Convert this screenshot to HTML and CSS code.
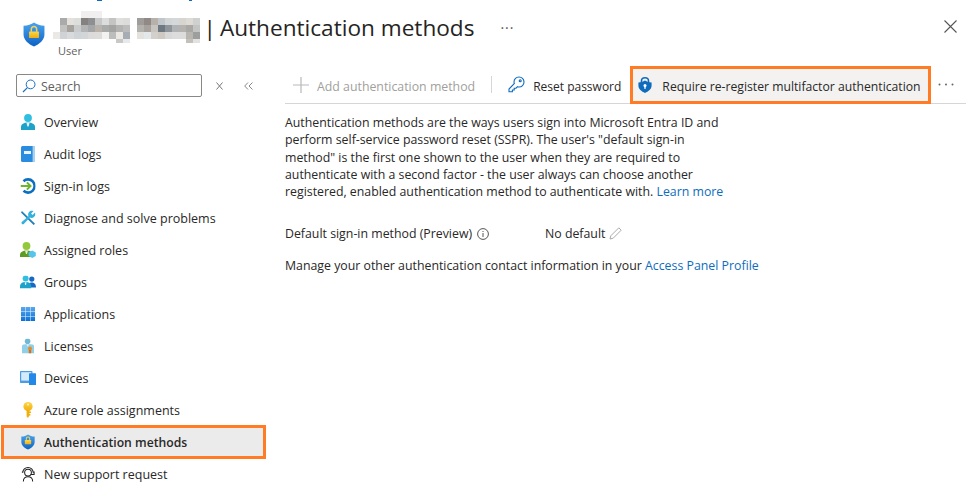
FILE: index.html
```html
<!DOCTYPE html>
<html lang="en">
<head>
    <meta charset="UTF-8">
    <meta name="viewport" content="width=device-width, initial-scale=1.0">
    <title>Authentication methods</title>
    <link rel="stylesheet" href="styles.css">
</head>
<body>
    <svg class="defs" width="0" height="0">
        <defs>
            <linearGradient id="shield" x1="0" y1="0" x2="0" y2="1">
                <stop offset="0" stop-color="#4aa3ee"/>
                <stop offset="1" stop-color="#0d62c4"/>
            </linearGradient>
            <linearGradient id="gold" x1="0" y1="0" x2="0" y2="1">
                <stop offset="0" stop-color="#fcd64a"/>
                <stop offset="1" stop-color="#f2ae0c"/>
            </linearGradient>
            <linearGradient id="tiles" gradientUnits="userSpaceOnUse" x1="0" y1="0" x2="0" y2="14">
                <stop offset="0" stop-color="#5aa8f0"/>
                <stop offset="1" stop-color="#0a72d6"/>
            </linearGradient>
            <symbol id="shield-lock" viewBox="0 0 16 18">
                <path d="M8 .3 C10 1.8 12.5 2.5 15.6 2.7 V9 C15.6 13 12 16 8 17.7 C4 16 .4 13 .4 9 V2.7 C3.5 2.5 6 1.8 8 .3Z" fill="url(#shield)"/>
                <path d="M5.5 7 V5.2 C5.5 3.6 6.6 2.7 8 2.7 C9.4 2.7 10.5 3.6 10.5 5.2 V7 H9.4 V5.2 C9.4 4.4 8.8 3.8 8 3.8 C7.2 3.8 6.6 4.4 6.6 5.2 V7Z" fill="#f7d35a"/>
                <rect x="4.4" y="6.8" width="7.2" height="4.8" rx=".5" fill="url(#gold)"/>
            </symbol>
        </defs>
    </svg>

    <header class="head">
        <svg class="crumb-clip" width="100" height="1"><rect x="0" width="5" height="1" fill="#0f6cbd"/><rect x="92" width="3" height="1" fill="#0f6cbd"/></svg>
        <svg class="head-icon" width="22" height="27"><use href="#shield-lock"/></svg>
        <div class="head-titles">
            <div class="title-row">
                <svg class="blur-name" width="147" height="32" viewBox="0 0 21 4.6" shape-rendering="crispEdges">
                    <rect x="4" y="0" width="3" height="1" fill="#f0eeee"/>

                    <rect x="1" y="1" width="1" height="1" fill="#aaaaaa"/><rect x="2" y="1" width="1" height="1" fill="#e4e0dc"/><rect x="3" y="1" width="1" height="1" fill="#dcdedc"/><rect x="4" y="1" width="1" height="1" fill="#858180"/><rect x="5" y="1" width="1" height="1" fill="#8d8f90"/><rect x="6" y="1" width="1" height="1" fill="#c5c7c8"/><rect x="7" y="1" width="1" height="1" fill="#dcdcdc"/><rect x="8" y="1" width="1" height="1" fill="#c4c4c2"/><rect x="9" y="1" width="1" height="1" fill="#dfdfdd"/><rect x="10" y="1" width="1" height="1" fill="#dcdcda"/>
                    <rect x="12" y="1" width="1" height="1" fill="#a09c99"/><rect x="13" y="1" width="1" height="1" fill="#8f8a86"/><rect x="14" y="1" width="1" height="1" fill="#b6b1ab"/><rect x="15" y="1" width="1" height="1" fill="#c0c6cc"/><rect x="16" y="1" width="1" height="1" fill="#d1d5d6"/><rect x="17" y="1" width="1" height="1" fill="#d4d8da"/><rect x="18" y="1" width="1" height="1" fill="#d8d4d0"/><rect x="19" y="1" width="1" height="1" fill="#dedad6"/><rect x="20" y="1" width="1" height="1" fill="#cfd0d0"/>

                    <rect x="1" y="2" width="1" height="1" fill="#c2c2c0"/><rect x="2" y="2" width="1" height="1" fill="#a6a29e"/><rect x="3" y="2" width="1" height="1" fill="#c9cbcc"/><rect x="4" y="2" width="1" height="1" fill="#b3b4b6"/><rect x="5" y="2" width="1" height="1" fill="#a4a6a8"/><rect x="6" y="2" width="1" height="1" fill="#b9b3ac"/><rect x="7" y="2" width="1" height="1" fill="#a9abab"/><rect x="8" y="2" width="1" height="1" fill="#a4a4a2"/><rect x="9" y="2" width="1" height="1" fill="#b3b3b1"/><rect x="10" y="2" width="1" height="1" fill="#bcbcbc"/>
                    <rect x="12" y="2" width="1" height="1" fill="#b4b2ae"/><rect x="13" y="2" width="1" height="1" fill="#a7a29e"/><rect x="14" y="2" width="1" height="1" fill="#c8c5c0"/><rect x="15" y="2" width="1" height="1" fill="#6e7880"/><rect x="16" y="2" width="1" height="1" fill="#8e9499"/><rect x="17" y="2" width="1" height="1" fill="#afb3b5"/><rect x="18" y="2" width="1" height="1" fill="#b5b3b0"/><rect x="19" y="2" width="1" height="1" fill="#aaa8a5"/><rect x="20" y="2" width="1" height="1" fill="#c3c4c4"/>

                    <rect x="0" y="3" width="1" height="1" fill="#ece8e6"/><rect x="1" y="3" width="1" height="1" fill="#cfd3d6"/><rect x="2" y="3" width="1" height="1" fill="#d8dadc"/><rect x="3" y="3" width="1" height="1" fill="#cfd4d8"/><rect x="4" y="3" width="1" height="1" fill="#d3d6d8"/><rect x="5" y="3" width="1" height="1" fill="#dcdbda"/><rect x="6" y="3" width="1" height="1" fill="#dddcda"/><rect x="7" y="3" width="1" height="1" fill="#f4f2f0"/><rect x="8" y="3" width="1" height="1" fill="#bcbebe"/><rect x="9" y="3" width="1" height="1" fill="#ece8e2"/><rect x="10" y="3" width="1" height="1" fill="#a7adb4"/>
                    <rect x="12" y="3" width="1" height="1" fill="#e4e2de"/><rect x="13" y="3" width="1" height="1" fill="#e3e8ea"/><rect x="14" y="3" width="1" height="1" fill="#d3cfca"/><rect x="15" y="3" width="1" height="1" fill="#cfc9c4"/><rect x="16" y="3" width="1" height="1" fill="#d8d8d8"/><rect x="17" y="3" width="1" height="1" fill="#dcdcdc"/><rect x="18" y="3" width="1" height="1" fill="#dcdcda"/><rect x="19" y="3" width="1" height="1" fill="#b9b5b0"/><rect x="20" y="3" width="1" height="1" fill="#9d9f9f"/>

                    <rect x="9" y="4" width="1" height=".6" fill="#c8c8c8"/><rect x="10" y="4" width="1" height=".6" fill="#e8eaea"/>
                    <rect x="19" y="4" width="1" height=".6" fill="#c4c0ba"/><rect x="20" y="4" width="1" height=".6" fill="#e4e2e0"/>
                </svg>
                <h1 class="title"><span class="title-bar">|</span>Authentication methods</h1>
                <span class="title-more">&middot;&middot;&middot;</span>
            </div>
            <div class="subtitle">User</div>
        </div>
        <svg class="close" width="13" height="13" viewBox="0 0 13 13"><path d="M.5 .5 12.5 12.5M12.5 .5 .5 12.5" stroke="#555" stroke-width="1.1" fill="none"/></svg>
    </header>

    <div class="page">
        <aside class="side">
            <div class="search-row">
                <div class="search">
                    <svg width="14" height="14" viewBox="0 0 14 14"><circle cx="8.6" cy="5.4" r="4.4" fill="none" stroke="#1a6fc4" stroke-width="1"/><path d="M5.4 8.6 1 13" stroke="#1a6fc4" stroke-width="1.2"/></svg>
                    <span class="search-text">Search</span>
                </div>
                <svg class="search-x" width="7" height="8" viewBox="0 0 7 8"><path d="M.5.5 6.5 7.5M6.5.5.5 7.5" stroke="#777" fill="none"/></svg>
                <svg class="collapse" width="9" height="8" viewBox="0 0 9 8"><path d="M4 .5 .7 4 4 7.5M8.5 .5 5 4 8.5 7.5" stroke="#888" fill="none"/></svg>
            </div>

            <nav class="nav">
                <a class="nav-item">
                    <svg width="14" height="16" viewBox="0 0 14 16"><circle cx="7" cy="4" r="3.9" fill="#30bfe0"/><path d="M0 16 V13 C0 10 3 8.4 7 8.4 C11 8.4 14 10 14 13 V16Z" fill="#1fa2c9"/><path d="M5.4 8.6 H8.6 L7.6 12.6 H6.4Z" fill="#e4f5fa"/></svg>
                    Overview
                </a>
                <a class="nav-item">
                    <svg width="14" height="16" viewBox="0 0 14 16"><rect width="14" height="16" rx="1.5" fill="#2a8ce0"/><rect x="11.6" width="2.4" height="16" fill="#a8d2f0"/><rect x="3" y="5" width="7" height="3" fill="#e8f3fb"/></svg>
                    Audit logs
                </a>
                <a class="nav-item">
                    <svg width="15" height="16" viewBox="0 0 15 16"><path d="M3 3.2 A6.6 6.6 0 1 1 3 12.8" fill="none" stroke="#0a6fc2" stroke-width="2.6"/><path d="M0 8 H9.5M6.4 4.4 10 8 6.4 11.6" fill="none" stroke="#6cb52d" stroke-width="2"/></svg>
                    Sign-in logs
                </a>
                <a class="nav-item">
                    <svg width="15" height="15" viewBox="0 0 16 16"><path d="M1.5 .5 15.5 14 14 15.5 .5 2Z" fill="#1c7fba"/><path d="M15.5 2 a4.2 4.2 0 0 1 -5.5 5.5 L3.5 14.5 a1.6 1.6 0 0 1 -2.2 -2.2 L8.5 6 a4.2 4.2 0 0 1 5.5 -5.5 L11.3 3.2 l1.5 1.5 Z" fill="#34b0dc"/></svg>
                    Diagnose and solve problems
                </a>
                <a class="nav-item">
                    <svg width="16" height="16" viewBox="0 0 16 16"><circle cx="6.5" cy="4" r="3.9" fill="#93c83d"/><path d="M0 15 V13 C0 10 3 8.4 6.5 8.4 C10 8.4 13 10 13 13 V15Z" fill="#5d9b23"/><path d="M5 8.6 H8 L7 12 H6Z" fill="#dff0c8"/><path d="M12.2 8.6 15.8 10.6 V14 L12.2 16 8.6 14 V10.6Z" fill="#57c4ec"/></svg>
                    Assigned roles
                </a>
                <a class="nav-item">
                    <svg width="16" height="13" viewBox="0 0 16 13"><circle cx="11.8" cy="3.6" r="2.6" fill="#1668c4"/><path d="M8 12 C8 8.4 9.5 7 11.8 7 C14 7 16 8.4 16 12Z" fill="#1668c4"/><circle cx="5.6" cy="3.1" r="3" fill="#30bfe0"/><path d="M0 13 V11 C0 8 2.5 6.6 5.6 6.6 C8.7 6.6 11.2 8 11.2 11 V13Z" fill="#1fa2c9"/><path d="M4.6 6.8 H6.6 L6 9.6 H5.2Z" fill="#e4f5fa"/></svg>
                    Groups
                </a>
                <a class="nav-item">
                    <svg width="14" height="14" viewBox="0 0 14 14" fill="url(#tiles)"><rect width="4.4" height="4.4"/><rect x="4.8" width="4.4" height="4.4"/><rect x="9.6" width="4.4" height="4.4"/><rect y="4.8" width="4.4" height="4.4"/><rect x="4.8" y="4.8" width="4.4" height="4.4"/><rect x="9.6" y="4.8" width="4.4" height="4.4"/><rect y="9.6" width="4.4" height="4.4"/><rect x="4.8" y="9.6" width="4.4" height="4.4"/><rect x="9.6" y="9.6" width="4.4" height="4.4"/></svg>
                    Applications
                </a>
                <a class="nav-item">
                    <svg width="12" height="15" viewBox="0 0 12 15"><circle cx="5.6" cy="2.8" r="2.8" fill="#70b8d4"/><path d="M0 15 V7.4 C0 6.2 2 5.8 6 5.8 C10 5.8 12 6.2 12 7.4 V15Z" fill="#8fd0e8"/><path d="M4.6 6 H6.8 L6 8.4Z" fill="#eaf6fb"/><circle cx="8" cy="10" r="2" fill="#ea8a26"/><path d="M6.8 11.5 H9.2 V15 H6.8Z" fill="#d9701a"/></svg>
                    Licenses
                </a>
                <a class="nav-item">
                    <svg width="16" height="14" viewBox="0 0 16 14"><rect width="12.5" height="12" rx=".8" fill="#4a9ce4"/><rect x="1.2" y="1.2" width="10.1" height="8.4" fill="#d6ebfa"/><rect x="9" y="2.2" width="7" height="11.8" rx=".6" fill="#2488e6"/></svg>
                    Devices
                </a>
                <a class="nav-item">
                    <svg width="10" height="16" viewBox="0 0 10 16"><path d="M3.6 8 H6.4 V9.6 H8 V11 H6.4 V12 H7.4 V13.4 H6.4 L5 16 3.6 14.6Z" fill="#eeb10c"/><circle cx="5" cy="4.6" r="4.6" fill="url(#gold)"/><circle cx="5" cy="2.6" r="1" fill="#fff3c4"/></svg>
                    Azure role assignments
                </a>
                <a class="nav-item active">
                    <svg width="14" height="16"><use href="#shield-lock"/></svg>
                    Authentication methods
                </a>
                <a class="nav-item">
                    <svg width="15" height="16" viewBox="0 0 16 16" fill="none" stroke="#222" stroke-width="1.1"><circle cx="8" cy="6.5" r="3.6"/><path d="M2.5 6.5 A5.5 5.5 0 0 1 13.5 6.5M1.5 6 H3M13 6 H14.5V8.5H11M3 16 C3 12.5 5 11 8 11 C11 11 13 12.5 13 16"/></svg>
                    New support request
                </a>
            </nav>
        </aside>

        <main class="main">
            <div class="toolbar">
                <button class="tool disabled">
                    <svg width="16" height="16" viewBox="0 0 16 16"><path d="M8 0V16M0 8H16" stroke="#b8b8b8" stroke-width="1.2" fill="none"/></svg>
                    Add authentication method
                </button>
                <span class="tool-sep"></span>
                <button class="tool reset">
                    <svg width="17" height="17" viewBox="0 0 17 17" fill="none" stroke="#0f6cbd" stroke-width="1.1"><path d="M11 1 C13.8 1 16 3.2 16 6 C16 8.8 13.8 11 11 11 C10.5 11 10 10.9 9.5 10.7 L8 12.2 H6.2 V14 H4.4 V15.8 H1 V13 L6.4 7.5 C6.1 7 6 6.5 6 6 C6 3.2 8.2 1 11 1Z"/><circle cx="12.2" cy="4.8" r="1"/></svg>
                    Reset password
                </button>
                <button class="tool flagged">
                    <svg width="14" height="16" viewBox="0 0 14 16"><path d="M3.5 6 V4 C3.5 2 5 .8 7 .8 C9 .8 10.5 2 10.5 4 V6" fill="none" stroke="#0f6cbd" stroke-width="1.6"/><path d="M7 3.4 C9 4.8 11 5.2 13.6 5.4 V8.6 C13.6 12 10.5 14.6 7 16 C3.5 14.6 .4 12 .4 8.6 V5.4 C3 5.2 5 4.8 7 3.4Z" fill="#0f6cbd"/><circle cx="7" cy="8.4" r="1.5" fill="#fff"/><rect x="6.3" y="8.6" width="1.4" height="3.2" fill="#fff"/></svg>
                    Require re-register multifactor authentication
                </button>
                <svg class="tool-more" width="16" height="3" viewBox="0 0 16 3" fill="#666"><circle cx="1.5" cy="1.5" r="1"/><circle cx="8" cy="1.5" r="1"/><circle cx="14.5" cy="1.5" r="1"/></svg>
            </div>

            <div class="content">
                <p class="intro">
                    Authentication methods are the ways users sign into Microsoft Entra ID and<br>
                    perform self-service password reset (SSPR). The user's "default sign-in<br>
                    method" is the first one shown to the user when they are required to<br>
                    authenticate with a second factor - the user always can choose another<br>
                    registered, enabled authentication method to authenticate with. <a class="link">Learn more</a>
                </p>
                <div class="default-row">
                    <span class="default-label">
                        Default sign-in method (Preview)
                        <svg width="12" height="12" viewBox="0 0 12 12" fill="none" stroke="#555"><circle cx="6" cy="6" r="5.4"/><path d="M6 5V9M6 3V4"/></svg>
                    </span>
                    <span class="default-value">
                        No default
                        <svg width="13" height="13" viewBox="0 0 13 13" fill="none" stroke="#aaa"><path d="M1 12 1.8 8.8 9.8 .8 12.2 3.2 4.2 11.2Z"/></svg>
                    </span>
                </div>
                <p class="manage">Manage your other authentication contact information in your <a class="link">Access Panel Profile</a></p>
            </div>
        </main>
    </div>
</body>
</html>
```

FILE: styles.css
```css
* {
    margin: 0;
    padding: 0;
    box-sizing: border-box;
}
body {
    width: 976px;
    height: 497px;
    overflow: hidden;
    background: #fff;
    color: #292827;
    font-family: "Open Sans", "Noto Sans", sans-serif;
    font-size: 12.5px;
}
.defs {
    display: block;
}
.head {
    position: relative;
    display: flex;
    align-items: flex-start;
    height: 74px;
    padding: 11px 19px 0 23px;
}
.crumb-clip {
    position: absolute;
    left: 97px;
    top: 0;
}
.head-icon {
    flex: none;
    margin-top: 10px;
    margin-right: 8px;
}
.head-titles {
    flex: 1;
}
.title-row {
    display: flex;
    align-items: center;
    height: 32px;
}
.blur-name {
    flex: none;
    margin-right: 3.5px;
}
.title {
    font-size: 22.6px;
    font-weight: 400;
    color: #252423;
    white-space: nowrap;
}
.title-bar {
    margin-right: 4px;
}
.title-more {
    margin-left: 26px;
    font-size: 14px;
    letter-spacing: 1px;
    color: #555;
}
.subtitle {
    padding-left: 5px;
    font-size: 11px;
    line-height: 15px;
    color: #605e5c;
}
.close {
    flex: none;
    margin-top: 9px;
}
.page {
    display: flex;
}
.side {
    width: 270px;
    flex: none;
}
.search-row {
    display: flex;
    align-items: center;
    height: 23px;
    padding-left: 16px;
}
.search {
    display: flex;
    align-items: center;
    gap: 5px;
    width: 186px;
    height: 23px;
    padding-left: 5px;
    border: 1px solid #8a8886;
    border-radius: 2px;
    color: #605e5c;
}
.search-text {
    padding-top: 2px;
}
.search-x {
    margin-left: 14px;
}
.collapse {
    margin-left: 21px;
}
.nav {
    margin-top: 9px;
}
.nav-item {
    position: relative;
    display: flex;
    align-items: center;
    height: 32px;
    padding-left: 44px;
    white-space: nowrap;
}
.nav-item svg {
    position: absolute;
    left: 28px;
    top: 50%;
    transform: translate(-50%, -50%);
}
.nav-item.active {
    margin: -1px 0 -1px 1px;
    width: 265px;
    height: 34px;
    padding-left: 40px;
    border: 3px solid #ff7c24;
    background: #ebebeb;
    font-size: 12.2px;
    font-weight: 600;
}
.nav-item.active svg {
    left: 24px;
}
.main {
    flex: 1;
    padding-right: 10px;
    margin-top: -8px;
    font-size: 12.33px;
}
.toolbar {
    display: flex;
    align-items: center;
    height: 38px;
    margin-left: 15px;
    border-bottom: 1px solid #d6d6d6;
}
.tool {
    display: flex;
    align-items: center;
    gap: 8px;
    height: 38px;
    padding-top: 3px;
    border: 0;
    background: none;
    font: inherit;
    color: inherit;
    white-space: nowrap;
}
.tool svg {
    margin-top: -3px;
}
.tool.disabled {
    padding-left: 8px;
    color: #a19f9d;
}
.tool-sep {
    width: 1px;
    height: 17px;
    margin: 0 16px;
    background: #d6d6d6;
}
.reset {
    font-size: 12px;
}
.flagged {
    gap: 10px;
    margin-left: 9px;
    width: 301px;
    padding-left: 5px;
    border: 3px solid #ff7c24;
    background: #f3f2f1;
    font-size: 12.2px;
}
.tool-more {
    flex: none;
    margin-left: 7px;
}
.content {
    padding: 10px 0 0 15px;
}
.intro {
    line-height: 17.3px;
}
.link {
    color: #0f6cbd;
}
.default-row {
    display: flex;
    align-items: center;
    margin-top: 25px;
}
.default-label {
    display: flex;
    align-items: center;
    gap: 5px;
    width: 260px;
}
.default-value {
    display: flex;
    align-items: center;
    gap: 4px;
}
.manage {
    margin-top: 15px;
}
```
